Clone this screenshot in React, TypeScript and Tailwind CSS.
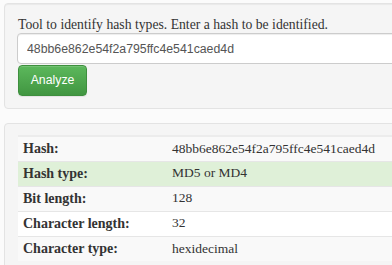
const rows = [
    { label: 'Hash:', value: '48bb6e862e54f2a795ffc4e541caed4d', bg: 'bg-[#f9f9f9]' },
    { label: 'Hash type:', value: 'MD5 or MD4', bg: 'bg-[#dff0d8]' },
    { label: 'Bit length:', value: '128', bg: 'bg-[#f9f9f9]' },
    { label: 'Character length:', value: '32', bg: 'bg-white' },
    { label: 'Character type:', value: 'hexidecimal', bg: 'bg-[#f9f9f9]' },
];

export default function App() {
    return (
        <div className="w-[392px] h-[265px] overflow-hidden bg-[#fbfbfb] pt-[3px] pl-[4px] text-[#333]" style={{ fontFamily: 'Georgia, "Liberation Serif", serif' }}>
            <div className="w-[420px] border border-[#e3e3e3] bg-[#f5f5f5] rounded-[4px] pt-3 pb-3 pl-[12px] shadow-[inset_0_1px_1px_rgba(0,0,0,0.05)]">
                <p className="text-[13.7px] leading-[17px] pl-[1px]">Tool to identify hash types. Enter a hash to be identified.</p>
                <input
                    readOnly
                    value="48bb6e862e54f2a795ffc4e541caed4d"
                    className="block w-[400px] h-[31px] border border-[#ccc] rounded-[4px] bg-white px-[9px] text-[12.3px] text-[#555] outline-none shadow-[inset_0_1px_1px_rgba(0,0,0,0.075)]"
                    style={{ fontFamily: '"Liberation Sans", Arial, sans-serif' }}
                />
                <button
                    className="mt-[1px] ml-[1px] h-[31px] w-[69px] rounded-[4px] border border-[#3e8f3e] bg-gradient-to-b from-[#5cb85c] to-[#419641] text-white text-[12.3px] shadow-[inset_0_1px_0_rgba(255,255,255,0.15),0_1px_1px_rgba(0,0,0,0.075)]"
                    style={{ fontFamily: '"Liberation Sans", Arial, sans-serif' }}
                >
                    Analyze
                </button>
            </div>

            <div className="mt-[14px] w-[420px] border border-[#e3e3e3] bg-[#f5f5f5] rounded-[4px] pt-[11px] pl-[13px] pb-4">
                <table className="w-[400px] border-t-2 border-[#ececec] border-collapse text-[14px]">
                    <tbody>
                        {rows.map((r, i) => (
                            <tr key={r.label} className={`${r.bg} ${i > 0 ? 'border-t border-[#e6e6e6]' : ''}`}>
                                <td className="w-[149px] h-[25px] pl-[5px] font-bold align-middle">{r.label}</td>
                                <td className="h-[25px] pl-[5px] align-middle text-[13.5px]">{r.value}</td>
                            </tr>
                        ))}
                    </tbody>
                </table>
            </div>
        </div>
    );
}
